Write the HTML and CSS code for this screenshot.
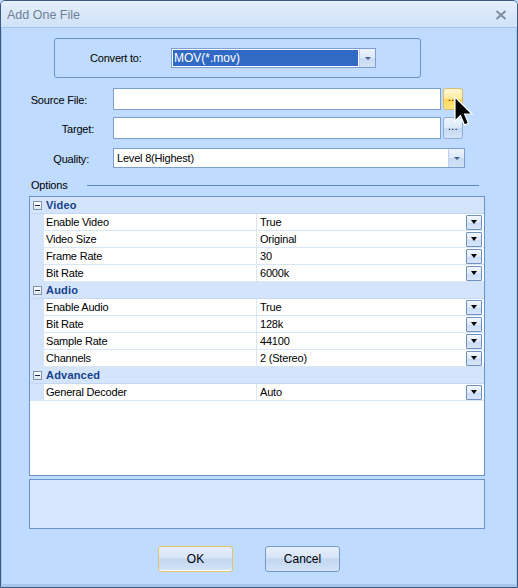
FILE: index.html
```html
<!DOCTYPE html>
<html>
<head>
<meta charset="utf-8">
<link rel="stylesheet" href="styles.css">
</head>
<body>
<div class="window">
  <div class="titlebar">
    <span class="title">Add One File</span>
    <svg class="close" width="12" height="10" viewBox="0 0 12 10"><path d="M1.5 1 L10.5 9 M10.5 1 L1.5 9" stroke="#7f8ea3" stroke-width="2"/></svg>
  </div>
  <div class="content">
    <div class="group">
      <span class="group-label">Convert to:</span>
      <div class="combo combo-sel">
        <div class="combo-text sel"><span>MOV(*.mov)</span></div>
        <div class="combo-btn"><span class="tri small"></span></div>
      </div>
    </div>

    <div class="field first">
      <label class="lbl lbl-source">Source File:</label>
      <div class="input"></div>
      <div class="browse hover">...</div>
    </div>
    <div class="field second">
      <label class="lbl lbl-target">Target:</label>
      <div class="input"></div>
      <div class="browse">...</div>
    </div>
    <div class="field third">
      <label class="lbl lbl-quality">Quality:</label>
      <div class="combo combo-q">
        <div class="combo-text"><span>Level 8(Highest)</span></div>
        <div class="combo-btn"><span class="tri small"></span></div>
      </div>
    </div>

    <div class="options">
      <span>Options</span>
      <div class="rule"></div>
    </div>

    <div class="pgrid">
      <div class="cat"><span class="toggle"></span><span class="cat-name">Video</span></div>
      <div class="row"><div class="gut"></div><div class="name">Enable Video</div><div class="val"><span>True</span><span class="dd"><span class="tri"></span></span></div></div>
      <div class="row"><div class="gut"></div><div class="name">Video Size</div><div class="val"><span>Original</span><span class="dd"><span class="tri"></span></span></div></div>
      <div class="row"><div class="gut"></div><div class="name">Frame Rate</div><div class="val"><span>30</span><span class="dd"><span class="tri"></span></span></div></div>
      <div class="row"><div class="gut"></div><div class="name">Bit Rate</div><div class="val"><span>6000k</span><span class="dd"><span class="tri"></span></span></div></div>
      <div class="cat"><span class="toggle"></span><span class="cat-name">Audio</span></div>
      <div class="row"><div class="gut"></div><div class="name">Enable Audio</div><div class="val"><span>True</span><span class="dd"><span class="tri"></span></span></div></div>
      <div class="row"><div class="gut"></div><div class="name">Bit Rate</div><div class="val"><span>128k</span><span class="dd"><span class="tri"></span></span></div></div>
      <div class="row"><div class="gut"></div><div class="name">Sample Rate</div><div class="val"><span>44100</span><span class="dd"><span class="tri"></span></span></div></div>
      <div class="row"><div class="gut"></div><div class="name">Channels</div><div class="val"><span>2 (Stereo)</span><span class="dd"><span class="tri"></span></span></div></div>
      <div class="cat"><span class="toggle"></span><span class="cat-name">Advanced</span></div>
      <div class="row"><div class="gut"></div><div class="name">General Decoder</div><div class="val"><span>Auto</span><span class="dd"><span class="tri"></span></span></div></div>
    </div>

    <div class="desc"></div>

    <div class="buttons">
      <div class="btn btn-default">OK</div>
      <div class="btn">Cancel</div>
    </div>
  </div>
  <svg class="cursor" width="20" height="32" viewBox="0 0 20 32"><path d="M1 1 L1 25 L6.5 19.5 L10.5 29 L14.5 27.3 L10.6 18.2 L18 18.2 Z" fill="#000" stroke="#fff" stroke-width="1.2" stroke-linejoin="miter"/></svg>
</div>
</body>
</html>
```

FILE: styles.css
```css
* { box-sizing: border-box; }
html, body { margin: 0; padding: 0; }
body {
  width: 518px;
  height: 588px;
  overflow: hidden;
  font-family: "Liberation Sans", Arial, sans-serif;
  font-size: 11px;
  letter-spacing: -0.2px;
  color: #000;
  background: #bfdbff;
}
.window {
  position: relative;
  width: 518px;
  height: 588px;
  border: 1px solid #3b5a82;
  border-radius: 5px 5px 0 0;
  background: #bfdbff;
  box-shadow: inset 1px 0 0 #a9c6ea, inset -1px 0 0 #a9c6ea, inset 0 -3px 0 #a9c6ea;
  overflow: hidden;
}
.titlebar {
  height: 27px;
  display: flex;
  align-items: center;
  justify-content: space-between;
  padding: 1px 10px 0 6px;
  background: linear-gradient(#e7f0fc 0%, #dbe8fa 45%, #d0e2f8 100%);
  border-bottom: 1px solid #a3c4ec;
}
.title {
  font-size: 12.5px;
  letter-spacing: 0;
  color: #6f7f94;
}
.close { margin-top: 1px; }
.group {
  margin: 10px 0 0 53px;
  width: 367px;
  height: 40px;
  border: 1px solid #6a93cc;
  border-radius: 3px;
  display: flex;
  align-items: center;
  padding-left: 35px;
}
.group-label { width: 81px; }
.combo {
  display: flex;
  height: 20px;
  border: 1px solid #7d9fcd;
  background: #fff;
}
.combo-sel { width: 205px; }
.combo-q { width: 352px; }
.combo-text {
  flex: 1;
  display: flex;
  align-items: center;
  padding-left: 3px;
}
.combo-text.sel {
  margin: 1px;
  padding-left: 1px;
  background: #316ac5;
  color: #fff;
  font-size: 12px;
  letter-spacing: 0;
}
.combo-btn {
  width: 16px;
  display: flex;
  align-items: center;
  justify-content: center;
  background: linear-gradient(#eef4fd 0%, #dce8f8 50%, #c8daf2 51%, #d4e3f6 100%);
  border-left: 1px solid #b8cfee;
}
.tri {
  width: 0; height: 0;
  border-left: 3.5px solid transparent;
  border-right: 3.5px solid transparent;
  border-top: 4px solid #000;
}
.tri.small {
  border-left-width: 3px;
  border-right-width: 3px;
  border-top: 3px solid #45608c;
}
.field {
  display: flex;
  align-items: center;
  height: 22px;
}
.field.first { margin-top: 10px; }
.field.second { margin-top: 7px; }
.field.third { margin-top: 9px; height: 20px; }
.lbl {
  width: 112px;
  text-align: right;
  padding-top: 2px;
}
.lbl-source { padding-right: 26px; }
.lbl-target { padding-right: 19px; }
.lbl-quality { padding-right: 24px; }
.input {
  width: 328px;
  height: 22px;
  border: 1px solid #7d9fcd;
  background: #fff;
}
.browse {
  width: 20px;
  height: 22px;
  margin-left: 2px;
  border: 1px solid #8eaed9;
  border-radius: 3px;
  background: linear-gradient(#eef4fd 0%, #dde9f9 50%, #c5d8f2 52%, #d6e5f8 100%);
  display: flex;
  align-items: center;
  justify-content: center;
  font-size: 10px;
  letter-spacing: 0.5px;
  line-height: 1;
  padding-bottom: 2px;
  color: #000;
}
.browse.hover {
  border-color: #d9bd6d;
  background: linear-gradient(#fff8d9 0%, #ffe995 50%, #ffd755 52%, #ffe585 100%);
}
.options {
  margin-top: 10px;
  margin-left: 30px;
  height: 14px;
  display: flex;
  align-items: center;
}
.options span { width: 56px; }
.rule {
  width: 392px;
  height: 1px;
  background: #5b88c8;
  margin-top: 1px;
}
.pgrid {
  margin: 4px 0 0 28px;
  width: 456px;
  height: 280px;
  border: 1px solid #6a93cc;
  background: #fff;
}
.cat {
  height: 17px;
  display: flex;
  align-items: center;
  background: #d3e4fb;
  border-bottom: 1px solid #c4d8f3;
}
.toggle {
  position: relative;
  width: 9px;
  height: 9px;
  margin-left: 3px;
  border: 1px solid #8094ad;
  background: linear-gradient(#ffffff, #dfe6ef);
}
.toggle::after {
  content: "";
  position: absolute;
  left: 1px; top: 3px;
  width: 5px; height: 1px;
  background: #1f2f4a;
}
.cat-name {
  margin-left: 4px;
  font-weight: bold;
  font-size: 11px;
  letter-spacing: 0.2px;
  color: #16418c;
}
.row {
  display: flex;
  height: 17px;
}
.gut {
  width: 14px;
  background: #d3e4fb;
}
.name {
  width: 213px;
  padding-left: 2px;
  display: flex;
  align-items: center;
  border-bottom: 1px solid #d9e6f6;
  border-right: 1px solid #d9e6f6;
}
.val {
  flex: 1;
  display: flex;
  align-items: center;
  justify-content: space-between;
  padding-left: 3px;
  padding-right: 2px;
  border-bottom: 1px solid #d9e6f6;
}
.dd {
  width: 16px;
  height: 15px;
  border: 1px solid #6f91c0;
  border-radius: 1px;
  background: linear-gradient(#f3f7fd 0%, #dfe9f8 50%, #cadcf4 52%, #d9e6f8 100%);
  display: flex;
  align-items: center;
  justify-content: center;
}
.desc {
  margin: 3px 0 0 28px;
  width: 456px;
  height: 50px;
  border: 1px solid #6a93cc;
  background: #d6e7fe;
}
.buttons {
  margin: 17px 0 0 157px;
  display: flex;
  gap: 32px;
}
.btn {
  width: 75px;
  height: 26px;
  border: 1px solid #7799c5;
  border-radius: 3px;
  background: linear-gradient(#e6effb 0%, #d7e5f8 45%, #c3d7f2 50%, #d3e3f7 100%);
  display: flex;
  align-items: center;
  justify-content: center;
  font-size: 12px;
  letter-spacing: 0;
}
.btn-default {
  border-color: #e2c567;
  box-shadow: inset 0 -1px 0 #fff;
}
.cursor {
  position: absolute;
  left: 453px;
  top: 95px;
}
```
